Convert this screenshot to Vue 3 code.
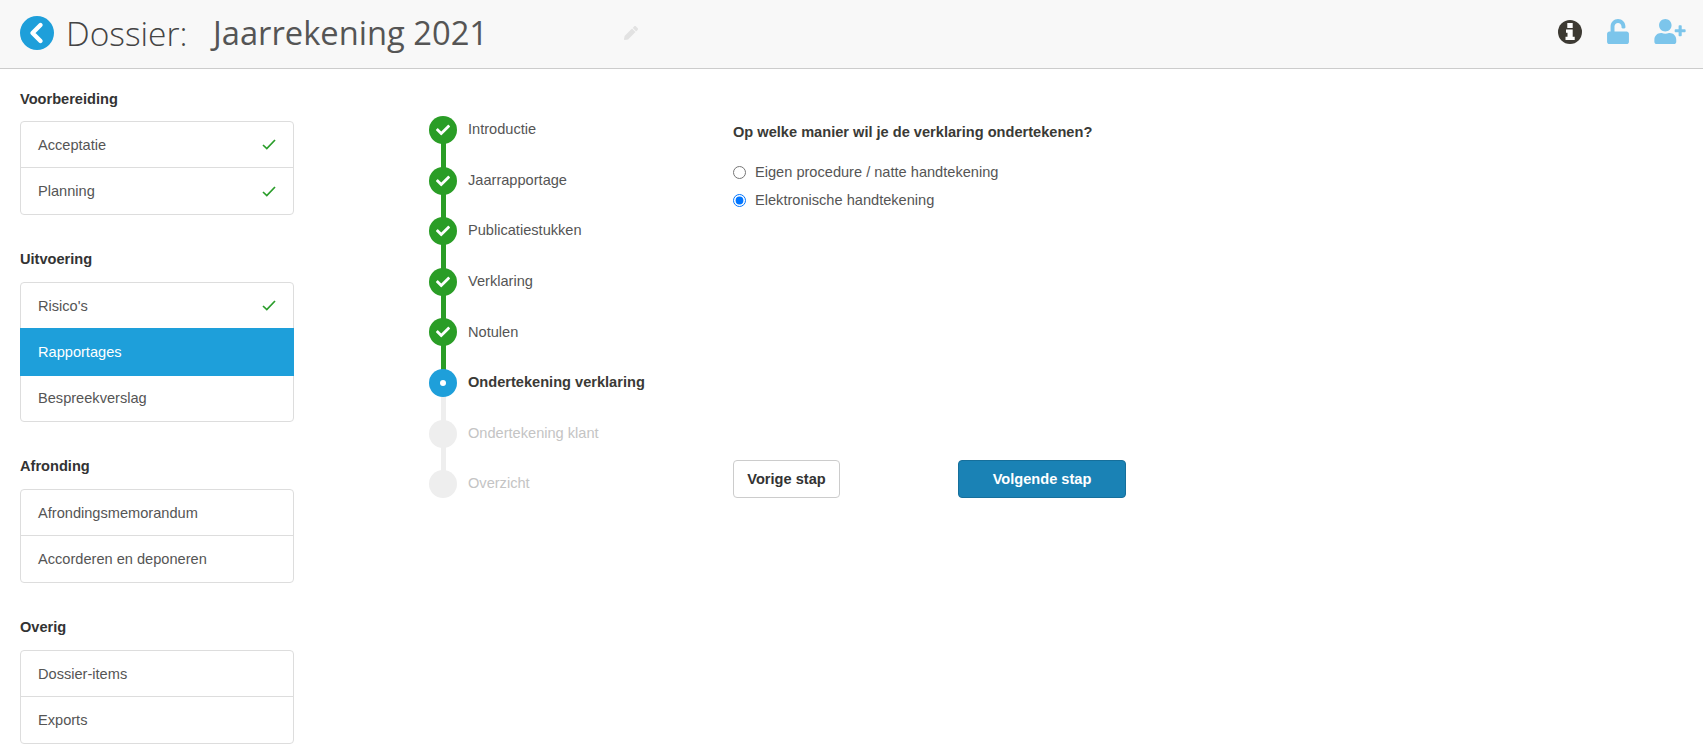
<script setup>
const groups = [
  { title: 'Voorbereiding', items: [{ t: 'Acceptatie', c: 1 }, { t: 'Planning', c: 1 }] },
  { title: 'Uitvoering', items: [{ t: "Risico's", c: 1 }, { t: 'Rapportages', a: 1 }, { t: 'Bespreekverslag' }] },
  { title: 'Afronding', items: [{ t: 'Afrondingsmemorandum' }, { t: 'Accorderen en deponeren' }] },
  { title: 'Overig', items: [{ t: 'Dossier-items' }, { t: 'Exports' }] },
]
const steps = [
  { t: 'Introductie', s: 'done' },
  { t: 'Jaarrapportage', s: 'done' },
  { t: 'Publicatiestukken', s: 'done' },
  { t: 'Verklaring', s: 'done' },
  { t: 'Notulen', s: 'done' },
  { t: 'Ondertekening verklaring', s: 'current' },
  { t: 'Ondertekening klant', s: 'todo' },
  { t: 'Overzicht', s: 'todo' },
]
const check = 'M173.898 439.404l-166.4-166.4c-9.997-9.997-9.997-26.206 0-36.204l36.203-36.204c9.997-9.998 26.207-9.998 36.204 0L192 312.69 432.095 72.596c9.997-9.997 26.207-9.997 36.204 0l36.203 36.204c9.997 9.997 9.997 26.206 0 36.204l-294.4 294.401c-9.998 9.997-26.207 9.997-36.204-.001z'
</script>

<template>
  <div class="page">
    <header class="top">
      <div class="left">
        <span class="back">
          <svg viewBox="0 0 34 34" width="34" height="34"><path d="M20.5 9l-8 8 8 8" fill="none" stroke="#fff" stroke-width="4.4" stroke-linecap="round" stroke-linejoin="round"/></svg>
        </span>
        <span class="dossier">Dossier:</span>
        <span class="name">Jaarrekening 2021</span>
        <svg class="pencil" viewBox="0 0 512 512" width="14" height="14"><path fill="#e2e2e2" d="M497.9 142.1l-46.1 46.1c-4.7 4.7-12.3 4.7-17 0l-111-111c-4.7-4.7-4.7-12.3 0-17l46.1-46.1c18.7-18.7 49.1-18.7 67.9 0l60.1 60.1c18.8 18.7 18.8 49.1 0 67.9zM284.2 99.8L21.6 362.4.4 483.9c-2.9 16.4 11.4 30.6 27.8 27.8l121.5-21.3 262.6-262.6c4.7-4.7 4.7-12.3 0-17l-111-111c-4.8-4.7-12.4-4.7-17.1 0z"/></svg>
      </div>
      <div class="actions">
        <svg viewBox="0 0 24 24" width="24" height="24"><circle cx="12" cy="12" r="12" fill="#3d3a33"/><path fill="#fff" d="M9.3 3h5.4v5H9.3zM8 9.5h6.7v7.3h2V20H7.5v-3.2h2v-4.1H8z"/></svg>
        <svg viewBox="0 0 448 512" width="22" height="25"><path fill="#7cc5eb" d="M400 256H152V152.9c0-39.6 31.7-72.5 71.3-72.9 40-.4 72.7 32.1 72.7 72v16c0 13.3 10.7 24 24 24h32c13.3 0 24-10.7 24-24v-16C376 68 307.5-.3 223.5 0 139.5.3 72 69.5 72 153.5V256H48c-26.5 0-48 21.5-48 48v160c0 26.5 21.5 48 48 48h352c26.5 0 48-21.5 48-48V304c0-26.5-21.5-48-48-48z"/></svg>
        <svg viewBox="0 0 640 512" width="32" height="25"><path fill="#7cc5eb" d="M624 208h-64v-64c0-8.8-7.2-16-16-16h-32c-8.8 0-16 7.2-16 16v64h-64c-8.8 0-16 7.2-16 16v32c0 8.8 7.2 16 16 16h64v64c0 8.8 7.2 16 16 16h32c8.8 0 16-7.2 16-16v-64h64c8.8 0 16-7.2 16-16v-32c0-8.8-7.2-16-16-16zm-400 48c70.7 0 128-57.3 128-128S294.7 0 224 0 96 57.3 96 128s57.3 128 128 128zm89.6 32h-16.7c-22.2 10.2-46.9 16-72.9 16s-50.6-5.8-72.9-16h-16.7C60.2 288 0 348.2 0 422.4V464c0 26.5 21.5 48 48 48h352c26.5 0 48-21.5 48-48v-41.6c0-74.2-60.2-134.4-134.4-134.4z"/></svg>
      </div>
    </header>

    <main class="body">
      <aside class="side">
        <section v-for="g in groups" :key="g.title" class="group">
          <h3 class="gtitle">{{ g.title }}</h3>
          <ul class="card">
            <li v-for="i in g.items" :key="i.t" class="row" :class="{ active: i.a }">
              <span>{{ i.t }}</span>
              <svg v-if="i.c" viewBox="0 0 14 11" width="14" height="11" class="tick"><path d="M1 6l3.8 3.6L13 1" fill="none" stroke="#2a9d2a" stroke-width="1.7"/></svg>
            </li>
          </ul>
        </section>
      </aside>

      <ol class="steps">
        <li v-for="(s, i) in steps" :key="s.t" class="step" :class="s.s">
          <span class="dot">
            <svg v-if="s.s === 'done'" viewBox="0 0 512 512" width="14" height="14"><path fill="#fff" :d="check"/></svg>
            <span v-else-if="s.s === 'current'" class="pip"></span>
          </span>
          <span class="label">{{ s.t }}</span>
        </li>
      </ol>

      <section class="form">
        <p class="q">Op welke manier wil je de verklaring ondertekenen?</p>
        <label class="radio"><input type="radio" name="sig" /><span>Eigen procedure / natte handtekening</span></label>
        <label class="radio"><input type="radio" name="sig" checked /><span>Elektronische handtekening</span></label>
        <div class="buttons">
          <button class="btn prev">Vorige stap</button>
          <button class="btn next">Volgende stap</button>
        </div>
      </section>
    </main>
  </div>
</template>

<style>
html, body { margin: 0; background: #fff; }
</style>

<style scoped>
.page { width: 1703px; height: 749px; overflow: hidden; font-family: "Liberation Sans", Arial, sans-serif; color: #555; font-size: 14.6px; box-sizing: border-box; }
.top { height: 68px; background: #f8f8f8; border-bottom: 1px solid #ccc; display: flex; align-items: center; justify-content: space-between; padding: 0 17px 0 20px; }
.left { display: flex; align-items: center; padding-bottom: 3px; }
.back { width: 34px; height: 34px; border-radius: 50%; background: #1e9fda; display: flex; margin-right: 12px; }
.dossier { font-family: "Open Sans", sans-serif; font-weight: 300; font-size: 33.5px; color: #444; width: 147px; }
.name { font-family: "Open Sans", sans-serif; font-size: 32.7px; color: #555; width: 411px; }
.actions { display: flex; align-items: center; gap: 25px; padding-bottom: 5px; }
.body { display: flex; align-items: flex-start; }
.side { width: 274px; margin-left: 20px; flex: none; padding-top: 20px; }
.group { margin-bottom: 34px; }
.gtitle { margin: 0 0 13px; font-size: 14.6px; line-height: 20px; font-weight: 700; color: #333; }
.group:first-child .gtitle { margin-bottom: 12px; }
.card { list-style: none; margin: 0; padding: 0; border: 1px solid #ddd; border-radius: 4px; }
.row { height: 45px; display: flex; align-items: center; justify-content: space-between; padding: 0 17px; border-top: 1px solid #ddd; line-height: 20px; }
.row:first-child { border-top: 0; }
.row:nth-child(2):last-child { height: 46px; }
.row.active { background: #1e9fda; color: #fff; margin: 0 -1px; height: 48px; padding: 0 18px; border-top: 0; }
.row.active + .row { border-top: 0; height: 43px; padding-bottom: 2px; }
.tick { display: block; }
.steps { list-style: none; margin: 0 0 0 135px; padding: 47px 0 0; width: 304px; flex: none; }
.step { height: 50.6px; display: flex; align-items: flex-start; position: relative; }
.step:not(:last-child)::after { content: ""; position: absolute; left: 11.5px; top: 20px; width: 5px; height: 40px; background: #eee; }
.step.done:not(:last-child)::after { background: #2a9d26; }
.dot { width: 28px; height: 28px; border-radius: 50%; background: #eee; display: flex; align-items: center; justify-content: center; flex: none; position: relative; z-index: 1; }
.done .dot { background: #2a9d26; }
.current .dot { background: #1e9fda; }
.pip { width: 6px; height: 6px; border-radius: 50%; background: #fff; }
.label { margin-left: 11px; line-height: 20px; margin-top: 3.3px; color: #555; }
.current .label { font-weight: 700; color: #3a3a36; }
.todo .label { color: #c4c4c4; }
.form { padding-top: 53px; width: 393px; }
.q { margin: 0 0 16px; font-weight: 700; color: #3a3a36; line-height: 20px; }
.radio { display: flex; align-items: center; height: 28px; color: #555; }
.radio input { margin: 0 9px 0 0; width: 13px; height: 13px; accent-color: #0075ff; }
.buttons { display: flex; justify-content: space-between; margin-top: 246px; }
.btn { height: 38px; border-radius: 4px; font: 700 14.6px "Liberation Sans", Arial, sans-serif; box-sizing: border-box; padding: 0; }
.prev { width: 107px; background: #fff; border: 1px solid #ccc; color: #333; }
.next { width: 168px; background: #1a82b5; border: 1px solid #166f9b; color: #fff; }
</style>
